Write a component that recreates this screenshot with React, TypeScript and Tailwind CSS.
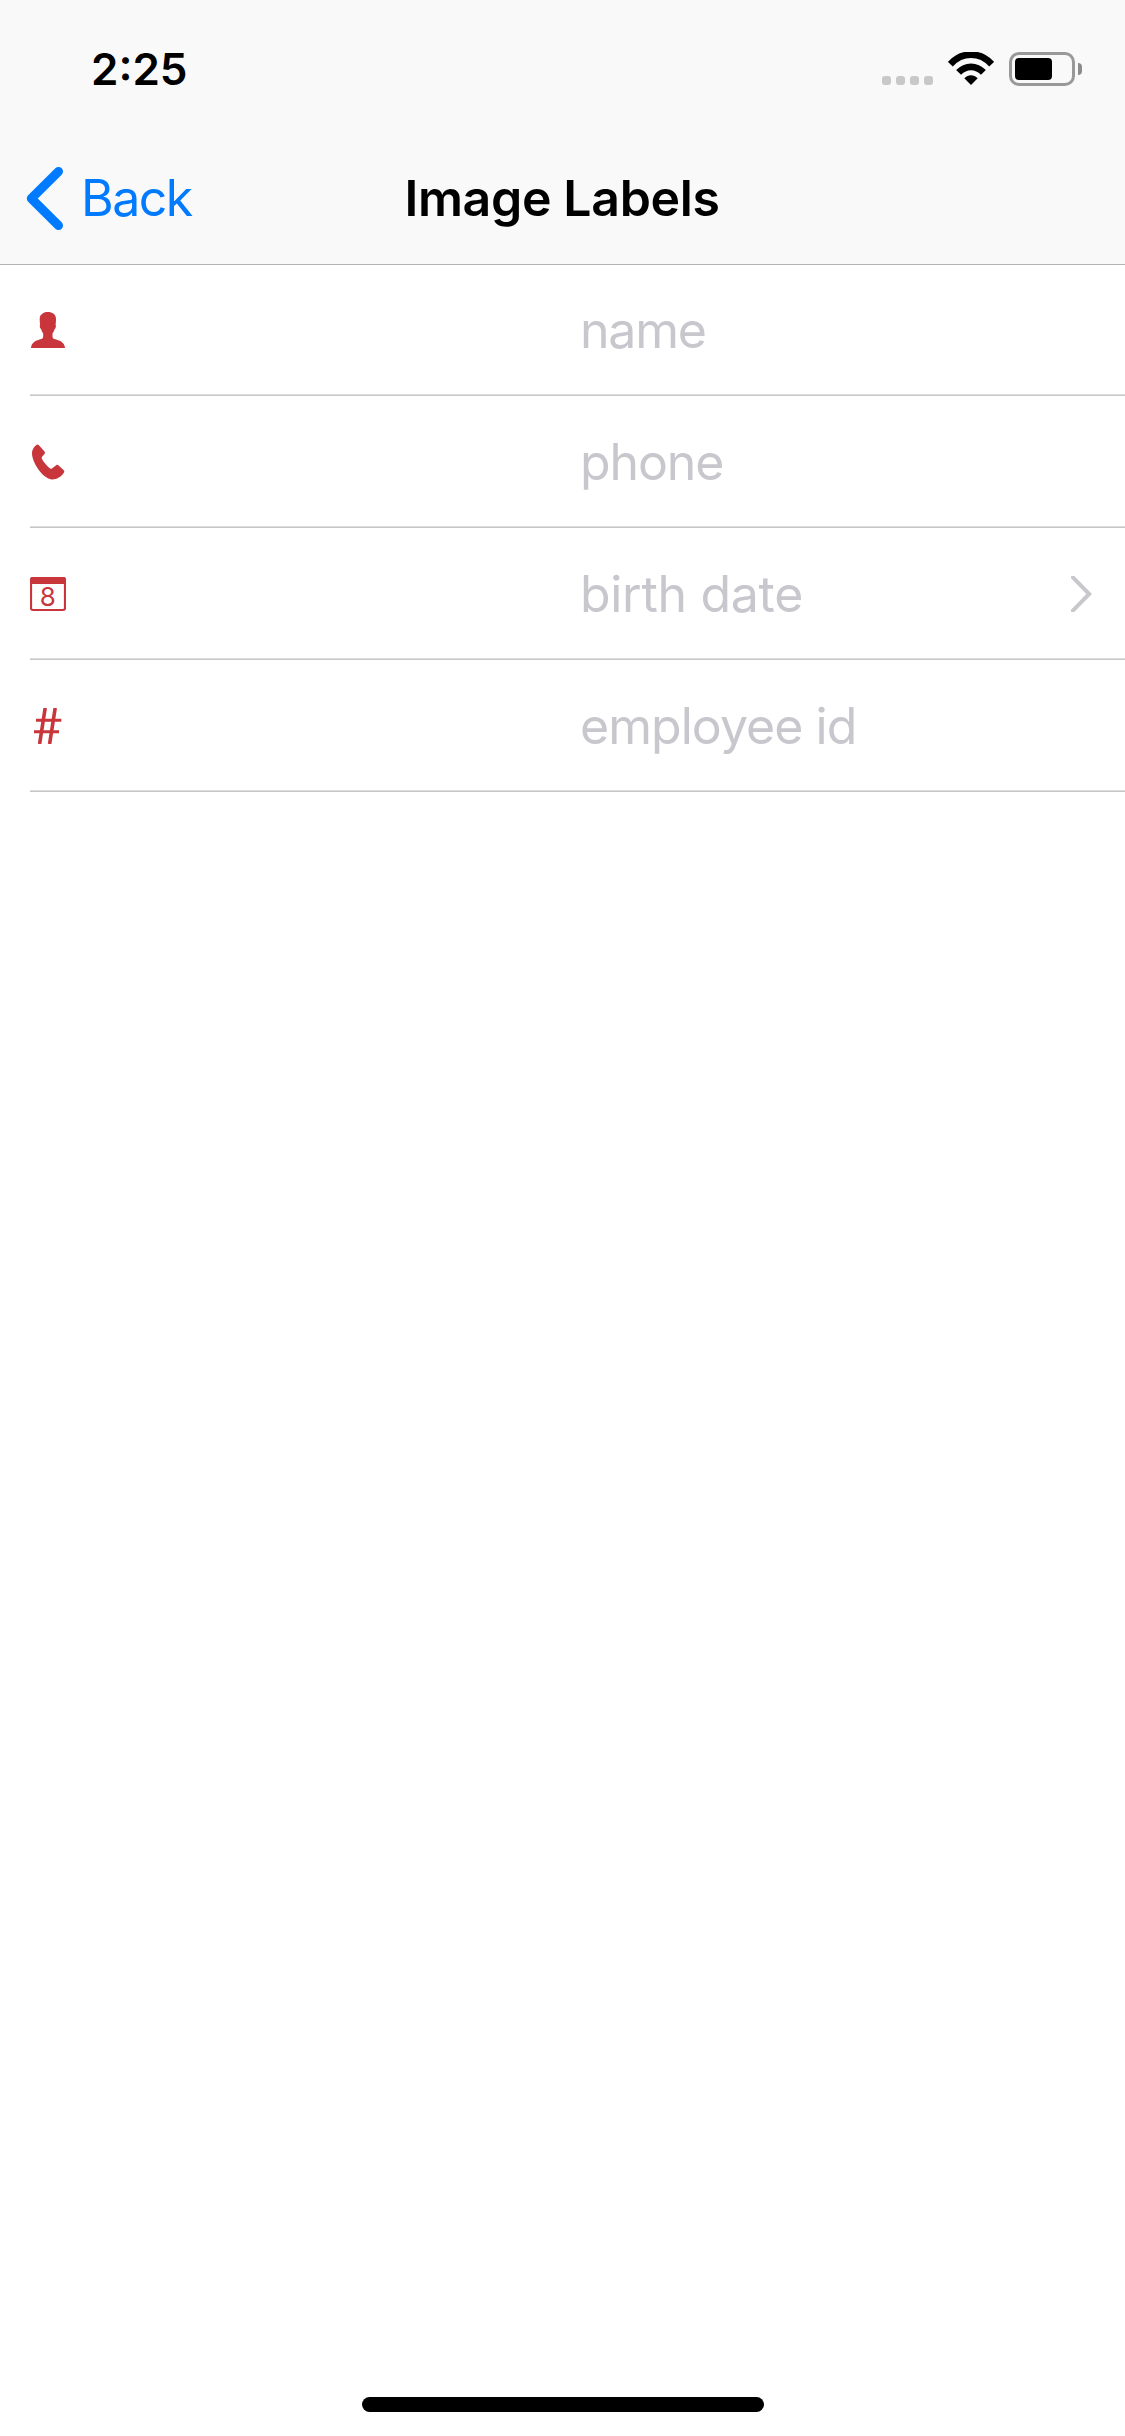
import type { ReactNode } from "react";

const RED = "#c8353b";

function PersonIcon() {
  return (
    <svg className="h-9 w-9" viewBox="0 0 36 36" fill={RED}>
      <path d="M17.600 0C22.500 0 26 2.200 26 7c0 2.300-.2 4-.4 5.700.7.900.2 3.600-.9 4.200-.5 1.700-1.300 3.300-2.200 4.500v2.800c0 1.400.5 2.200 1.700 2.700C29.500 28.200 34.600 30 35 36H1c.4-6 5.200-7.800 10.500-9.100 1.200-.5 1.700-1.300 1.700-2.700v-2.800c-.9-1.200-1.700-2.800-2.200-4.500-1.100-.6-1.600-3.300-.9-4.200C9.900 11 9.700 9.300 9.700 7c0-2.500.8-4.200 2.500-5C13.300.6 15.600 0 17.600 0Z" />
    </svg>
  );
}

function PhoneIcon() {
  return (
    <svg className="h-9 w-9" viewBox="0 0 36 36" fill={RED}>
      <path d="M6.300.9c.8-.7 1.700-.7 2.400.2l5.800 6.400c.7.900.6 1.800-.1 2.600l-2.100 2.300c-.7.700-.8 1.600-.3 2.500 1.800 3.300 4.500 6.500 7.500 9.200.8.800 1.800.8 2.700.1l4-3c.8-.6 1.700-.5 2.500.2l5 4.800c.8.800.8 1.700.1 2.600-2.700 4.400-7.500 6.900-12.300 6.600C13.500 34.400 2.700 20.500 2 9.800 1.800 6.200 3.500 3.100 6.300.9Z" />
    </svg>
  );
}

function CalendarIcon() {
  return (
    <svg className="h-9 w-9" viewBox="0 0 36 36" fill="none">
      <rect x="1" y="2" width="34" height="32" rx="2" stroke={RED} strokeWidth="2.200" />
      <path d="M0 8V3.500A2.500 2.500 0 0 1 2.500 1h31A2.500 2.500 0 0 1 36 3.500V8Z" fill={RED} />
      <text x="17.700" y="29.800" textAnchor="middle" fontSize="26" fill={RED} className="font-['Inter',sans-serif]">
        8
      </text>
    </svg>
  );
}

function HashIcon() {
  return (
    <svg className="h-9 w-9" viewBox="0 0 36 36" fill="none" stroke={RED} strokeWidth="3.600">
      <path d="M15.200 0 9.600 36M25.200 0 19.600 36" />
      <path d="M6 12.300H31.300M4 23.700H29" strokeWidth="3" />
    </svg>
  );
}

function WifiIcon() {
  return (
    <svg className="h-[34px] w-[46px]" viewBox="0 0 46 34" fill="none" stroke="#000" strokeWidth="6.800">
      <path d="M2.300 12.200C14-.5 32-.5 43.700 12.200" />
      <path d="M10.600 20.400C17.800 12.900 28.200 12.900 35.400 20.400" />
      <path d="M16.300 26.300C20.300 22.300 25.700 22.300 29.700 26.300L23 33Z" fill="#000" stroke="none" />
    </svg>
  );
}

function Battery() {
  return (
    <div className="flex items-center gap-[3px]">
      <div className="h-[34px] w-[66px] rounded-[10px] border-[3px] border-[#999999] p-[3px]">
        <div className="h-[22px] w-[37px] rounded-[4px] bg-black" />
      </div>
      <div className="h-[12px] w-[4px] rounded-r-full bg-[#8c8c8c]" />
    </div>
  );
}

function Row({
  icon,
  placeholder,
  tracking,
  disclosure,
}: {
  icon: ReactNode;
  placeholder: string;
  tracking: string;
  disclosure?: boolean;
}) {
  return (
    <li className="ml-[30px] flex h-[132px] items-center pr-[33px] shadow-[inset_0_-1px_0_#c6c6c8,inset_0_-2px_0_#dededf]">
      <div className="w-[550px]">{icon}</div>
      <span className={`flex-1 text-[50px] leading-[60px] text-[#c7c7cd] ${tracking}`}>{placeholder}</span>
      {disclosure && (
        <svg className="h-9 w-[21px]" viewBox="0 0 21 36" fill="none" stroke="#c7c7cc" strokeWidth="4">
          <path d="M.5 0 18.200 18 .5 36" />
        </svg>
      )}
    </li>
  );
}

export default function App() {
  return (
    <div className="flex h-[2436px] w-[1125px] flex-col bg-white font-['Inter',sans-serif] text-black">
      <header className="h-[265px] border-b border-[#b2b2b2] bg-[#f9f9f9]">
        <div className="flex h-[132px] items-center justify-between pt-[6px] pr-[43px] pl-[91px]">
          <span className="text-[44px] leading-[54px] font-semibold">2:25</span>
          <div className="flex h-[34px] items-center">
            <div className="mr-[15px] flex gap-[5px] self-end pb-px">
              <i className="size-[9px] rounded-[3px] bg-[#c8c8c8]" />
              <i className="size-[9px] rounded-[3px] bg-[#c8c8c8]" />
              <i className="size-[9px] rounded-[3px] bg-[#c8c8c8]" />
              <i className="size-[9px] rounded-[3px] bg-[#c8c8c8]" />
            </div>
            <div className="mr-[15px]">
              <WifiIcon />
            </div>
            <Battery />
          </div>
        </div>
        <nav className="grid h-[132px] grid-cols-[1fr_auto_1fr] items-center pr-[27px] pl-[26px]">
          <div className="flex items-center gap-[17px] text-[#007aff]">
            <svg className="h-16 w-[38px]" viewBox="0 0 38 64" fill="none" stroke="#007aff" strokeWidth="9" strokeLinecap="round" strokeLinejoin="round">
              <path d="M32.500 5.500 5.300 32.500 32.500 59.500" />
            </svg>
            <span className="text-[50px] leading-[60px] tracking-[-1.5px]">Back</span>
          </div>
          <h1 className="text-[50px] leading-[60px] font-semibold tracking-[-0.35px]">Image Labels</h1>
        </nav>
      </header>
      <ul className="-mt-px flex-1">
        <Row icon={<PersonIcon />} placeholder="name" tracking="tracking-[-1.200px]" />
        <Row icon={<PhoneIcon />} placeholder="phone" tracking="tracking-[-1.100px]" />
        <Row icon={<CalendarIcon />} placeholder="birth date" tracking="tracking-[-0.300px]" disclosure />
        <Row icon={<HashIcon />} placeholder="employee id" tracking="tracking-[-0.950px]" />
      </ul>
      <div className="mb-6 ml-[362px] h-[15px] w-[402px] rounded-full bg-black" />
    </div>
  );
}
